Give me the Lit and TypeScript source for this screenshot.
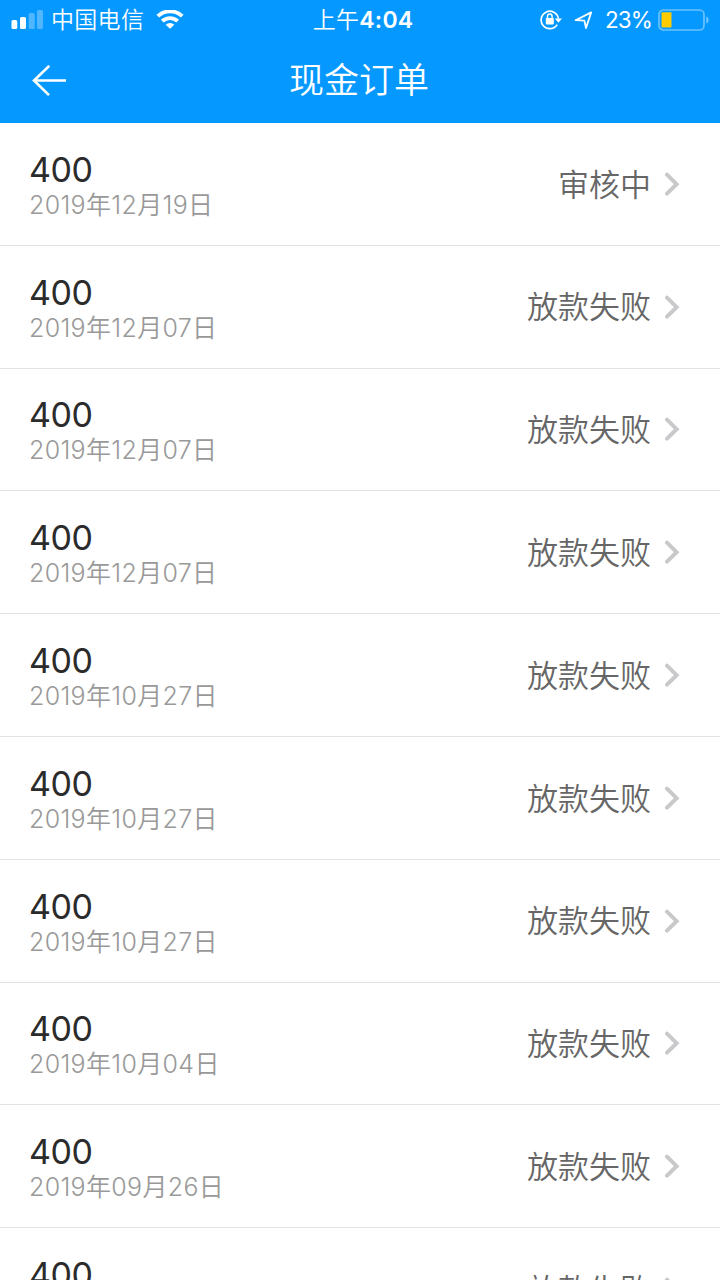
import { LitElement, html, css } from "lit";
import { customElement, property } from "lit/decorators.js";

interface Order {
  amount: string;
  date: string;
  status: string;
}

const FAILED = "放款失败";

const ORDERS: Order[] = [
  { amount: "400", date: "2019年12月19日", status: "审核中" },
  { amount: "400", date: "2019年12月07日", status: FAILED },
  { amount: "400", date: "2019年12月07日", status: FAILED },
  { amount: "400", date: "2019年12月07日", status: FAILED },
  { amount: "400", date: "2019年10月27日", status: FAILED },
  { amount: "400", date: "2019年10月27日", status: FAILED },
  { amount: "400", date: "2019年10月27日", status: FAILED },
  { amount: "400", date: "2019年10月04日", status: FAILED },
  { amount: "400", date: "2019年09月26日", status: FAILED },
  { amount: "400", date: "", status: FAILED },
];

@customElement("status-bar")
export class StatusBar extends LitElement {
  static styles = css`
    :host {
      display: grid;
      grid-template-columns: 1fr auto 1fr;
      align-items: center;
      height: 40px;
      padding: 0 10px 0 11px;
      color: #fff;
      font-size: 23px;
      line-height: 40px;
      white-space: nowrap;
    }
    .left,
    .right {
      display: flex;
      align-items: center;
    }
    .right {
      justify-content: flex-end;
    }
    .carrier {
      margin: 0 12px 0 8px;
      letter-spacing: 0.3px;
      font-weight: 350;
    }
    .time {
      letter-spacing: 0.3px;
      padding-left: 5px;
      font-weight: 350;
    }
    .clock {
      font-weight: 600;
      letter-spacing: 0.2px;
    }
    .lock {
      margin-right: 12px;
    }
    .arrow {
      margin-right: 12px;
    }
    .percent {
      margin-right: 6px;
      font-size: 22.5px;
      letter-spacing: -0.9px;
    }
    svg {
      display: block;
      flex: none;
    }
  `;

  render() {
    return html`
      <div class="left">
        <svg width="32" height="20" viewBox="0 0 32 20" fill="#fff">
          <rect x="0.5" y="10" width="5.8" height="9" rx="1.6" />
          <rect x="9" y="7" width="6" height="12" rx="1.6" />
          <rect x="17.7" y="3" width="6" height="16" rx="1.6" opacity=".3" />
          <rect x="26" y="0" width="6" height="19" rx="1.6" opacity=".3" />
        </svg>
        <span class="carrier">中国电信</span>
        <svg width="28" height="20" viewBox="0 0 28 20">
          <g fill="none" stroke="#fff" stroke-width="3.8">
            <path d="M1.8 6.2a17.5 17.5 0 0 1 24.4 0" />
            <path d="M6.3 11.2a11 11 0 0 1 15.4 0" />
          </g>
          <path d="M9.7 14.7a6 6 0 0 1 8.6 0L14 18.8z" fill="#fff" />
        </svg>
      </div>
      <div class="time">上午<span class="clock">4:04</span></div>
      <div class="right">
        <svg class="lock" width="22" height="20" viewBox="0 0 22 20">
          <path d="M17.2 14.6A8.7 8.7 0 1 1 18.4 8.5" fill="none" stroke="#fff" stroke-width="1.7" />
          <path d="M14.8 8.6h7.2l-3.6 4.2z" fill="#fff" />
          <rect x="5.8" y="8" width="8" height="6.4" rx=".8" fill="#fff" />
          <path d="M7.5 9V6.3a2.3 2.3 0 0 1 4.6 0V9" fill="none" stroke="#fff" stroke-width="1.4" />
        </svg>
        <svg class="arrow" width="19" height="19" viewBox="0 0 19 19">
          <path d="M1.6 9.2L17.2 1.4l-5.2 15.6-1.6-7.4z" fill="none" stroke="#fff" stroke-width="1.8" stroke-linejoin="round" />
        </svg>
        <span class="percent">23%</span>
        <svg width="52" height="22" viewBox="0 0 52 22">
          <rect x="1" y="1" width="45" height="20" rx="4.5" fill="none" stroke="#fff" stroke-opacity=".4" stroke-width="1.7" />
          <rect x="3.5" y="3.3" width="10" height="15.2" rx="1" fill="#fc0" />
          <path d="M48.3 7.5c3 1 3 6 0 7z" fill="#fff" opacity=".45" />
        </svg>
      </div>
    `;
  }
}

@customElement("nav-header")
export class NavHeader extends LitElement {
  static styles = css`
    :host {
      display: grid;
      grid-template-columns: 100px 1fr 100px;
      align-items: center;
      height: 82.95px;
      color: #fff;
    }
    .back {
      display: block;
      margin-left: 31px;
    }
    .title {
      text-align: center;
      font-size: 35px;
      font-weight: 350;
      line-height: 50px;
      padding: 0 2px 3px 0;
    }
  `;

  render() {
    return html`
      <svg class="back" width="36" height="32" viewBox="0 0 36 32" fill="none" stroke="#fff" stroke-width="2.6">
        <path d="M18.3 0.8L3 15.5l15 14.6M3 15.5h32" />
      </svg>
      <div class="title">现金订单</div>
    `;
  }
}

@customElement("order-row")
export class OrderRow extends LitElement {
  @property({ attribute: false }) order!: Order;

  static styles = css`
    :host {
      display: flex;
      align-items: center;
      box-sizing: border-box;
      flex: none;
      height: 122.8px;
      padding: 0 40px 0 29px;
      border-bottom: 1px solid #e2e2e2;
    }
    .info {
      flex: 1;
      padding-top: 6px;
    }
    .amount {
      color: #2b2b2b;
      font-size: 34px;
      line-height: 36px;
      letter-spacing: -0.5px;
    }
    .date {
      min-height: 34px;
      color: #999;
      font-size: 25px;
      font-weight: 350;
      line-height: 34px;
      letter-spacing: 0.33px;
    }
    .status {
      color: #666;
      font-size: 31px;
      font-weight: 350;
      line-height: 44px;
      margin-right: 13px;
      padding-top: 1.4px;
    }
    svg {
      display: block;
    }
  `;

  render() {
    return html`
      <div class="info">
        <div class="amount">${this.order.amount}</div>
        <div class="date">${this.order.date}</div>
      </div>
      <div class="status">${this.order.status}</div>
      <svg width="16" height="24" viewBox="0 0 16 24" fill="none" stroke="#c9c9cb" stroke-width="4" stroke-linecap="round">
        <path d="M3 2.7L12.6 12.2 3 21.7" />
      </svg>
    `;
  }
}

@customElement("app-root")
export class AppRoot extends LitElement {
  static styles = css`
    :host {
      display: flex;
      flex-direction: column;
      height: 1280px;
      overflow: hidden;
      background: #fff;
      font-family: Inter, "Noto Sans CJK SC", sans-serif;
    }
    .top {
      flex: none;
      background: #0599ff;
    }
    .list {
      display: flex;
      flex-direction: column;
      flex: 1;
      min-height: 0;
      overflow: hidden;
    }
  `;

  render() {
    return html`
      <header class="top">
        <status-bar></status-bar>
        <nav-header></nav-header>
      </header>
      <main class="list">
        ${ORDERS.map((order) => html`<order-row .order=${order}></order-row>`)}
      </main>
    `;
  }
}
